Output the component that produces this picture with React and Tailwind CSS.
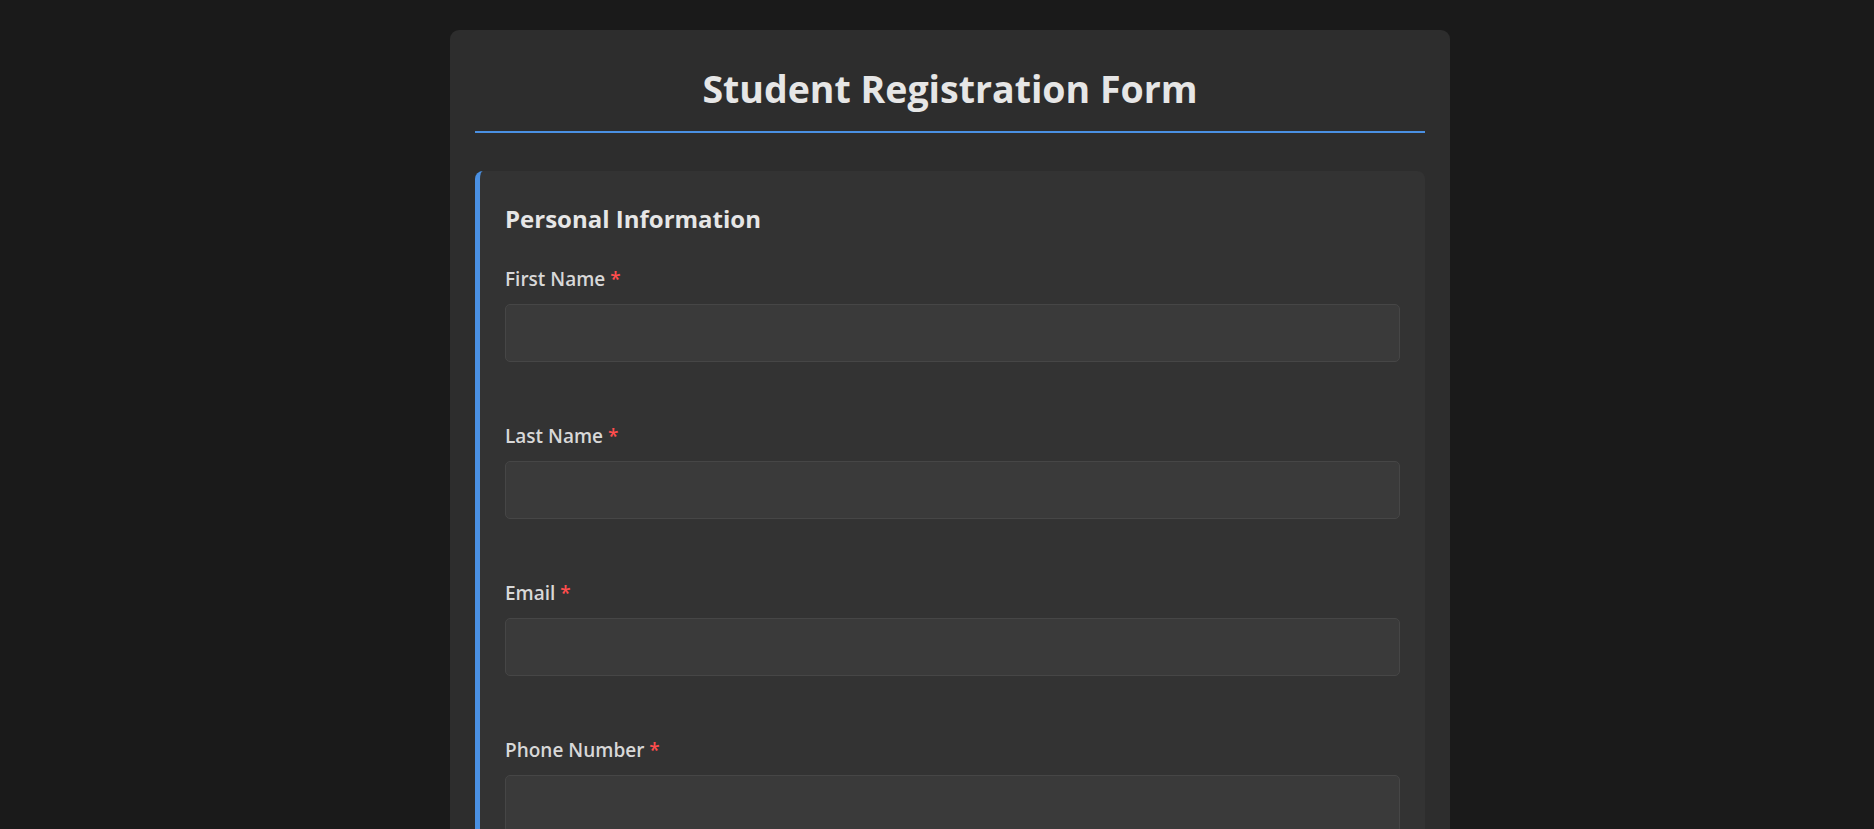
import { useState } from 'react';

const fields = [
  { id: 'firstName', label: 'First Name', type: 'text' },
  { id: 'lastName', label: 'Last Name', type: 'text' },
  { id: 'email', label: 'Email', type: 'email' },
  { id: 'phone', label: 'Phone Number', type: 'tel' },
  { id: 'dob', label: 'Date of Birth', type: 'date' },
];

function Field({ field, value, onChange }) {
  return (
    <div className="mb-[62px]">
      <label
        htmlFor={field.id}
        className="block mb-[13px] text-[19px] leading-[24px] font-semibold text-[#d8d8d8]"
      >
        {field.label} <span className="text-[#ff4d4d]">*</span>
      </label>
      <input
        id={field.id}
        type={field.type}
        value={value}
        onChange={(e) => onChange(field.id, e.target.value)}
        className="block w-full h-[58px] px-4 rounded-[5px] bg-[#3a3a3a] border border-[#464646] text-[#e0e0e0] text-[18px] outline-none focus:border-[#4a90e2]"
      />
    </div>
  );
}

export default function App() {
  const [form, setForm] = useState({});

  const update = (id, value) => setForm((f) => ({ ...f, [id]: value }));

  return (
    <div
      className="min-h-screen bg-[#1a1a1a] flex justify-center pl-[26px] pt-[30px]"
      style={{ fontFamily: '"Open Sans", "Noto Sans", sans-serif' }}
    >
      <div className="w-[1000px] bg-[#2d2d2d] rounded-[9px] px-[25px] pt-[35px] pb-[30px] self-start">
        <h1 className="text-center text-[37.5px] leading-[48px] font-bold text-[#e6e6e6] pb-[18px] border-b-2 border-[#4a90e2]">
          Student Registration Form
        </h1>

        <form className="mt-[38px]" onSubmit={(e) => e.preventDefault()}>
          <section className="bg-[#333333] rounded-[8px] border-l-[5px] border-[#4a90e2] pl-[25px] pr-[25px] pt-[32px] pb-[10px]">
            <h2 className="text-[24px] leading-[32px] font-bold text-[#e6e6e6] mb-[32px]">
              Personal Information
            </h2>
            {fields.map((field) => (
              <Field key={field.id} field={field} value={form[field.id] || ''} onChange={update} />
            ))}
          </section>
        </form>
      </div>
    </div>
  );
}
